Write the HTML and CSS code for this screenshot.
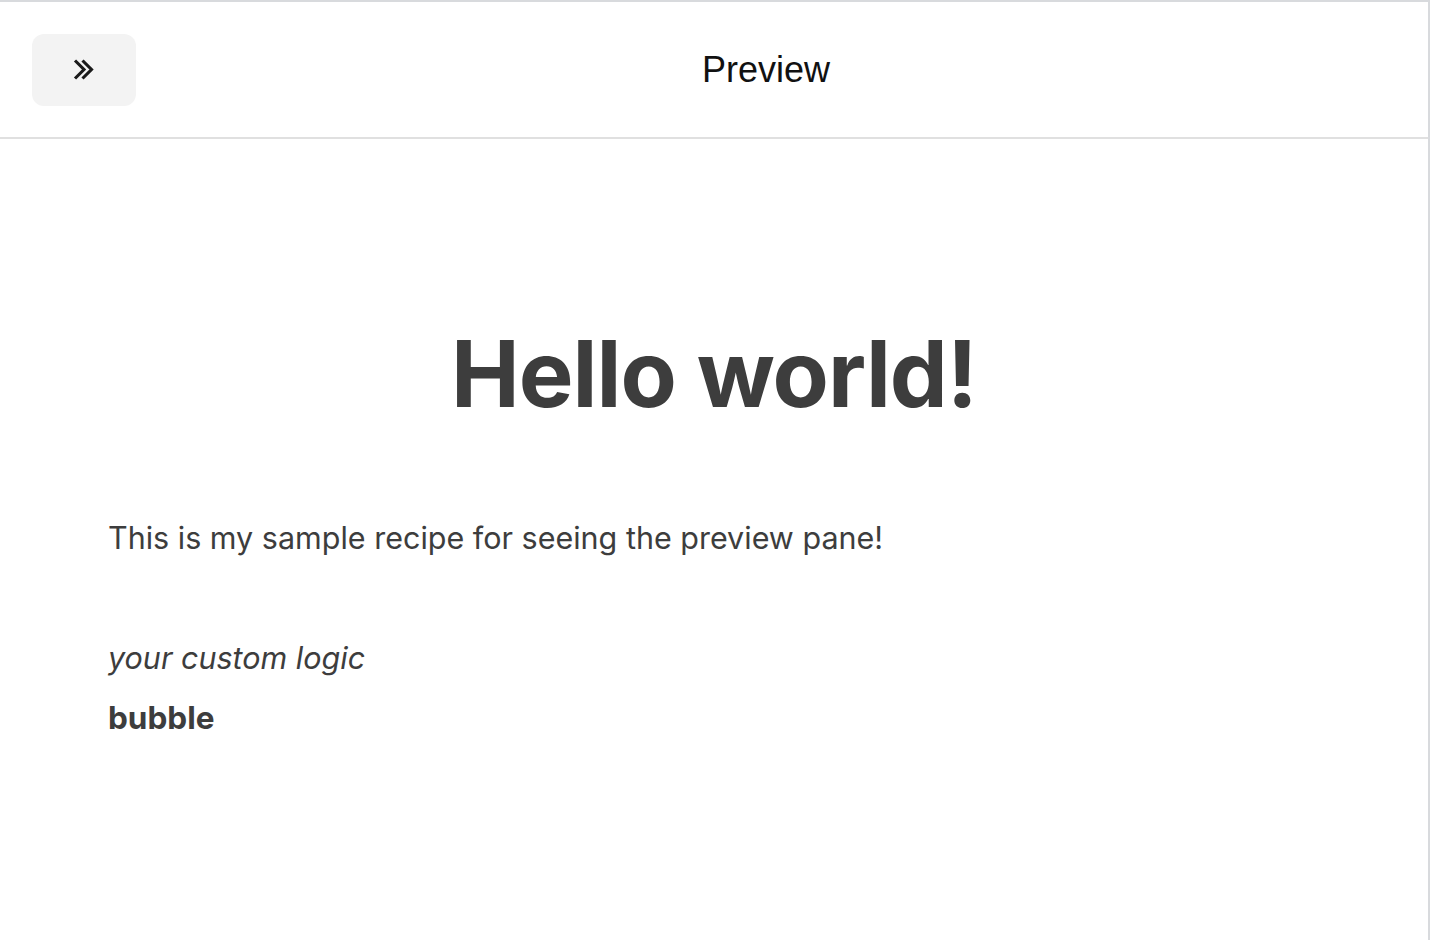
FILE: index.html
```html
<!DOCTYPE html>
<html>
<head>
<meta charset="utf-8">
<link rel="stylesheet" href="styles.css">
</head>
<body>
<div class="pane">
  <header class="bar">
    <button class="toggle" aria-label="Expand">
      <svg width="26" height="24" viewBox="0 0 26 24" fill="none" stroke="#1a1a1a" stroke-width="3.1" stroke-linecap="butt" stroke-linejoin="miter">
        <polyline points="4,2.5 13,11.5 4,20.5"/>
        <polyline points="11.5,2.5 20.5,11.5 11.5,20.5"/>
      </svg>
    </button>
    <div class="title">Preview</div>
  </header>
  <main class="content">
    <h1 class="heading">Hello world!</h1>
    <p class="lead">This is my sample recipe for seeing the preview pane!</p>
    <p class="italic">your custom logic</p>
    <p class="bold">bubble</p>
  </main>
</div>
</body>
</html>
```
FILE: styles.css
```css
html, body {
  margin: 0;
  padding: 0;
  background: #ffffff;
}
.pane {
  width: 1430px;
  height: 940px;
  box-sizing: border-box;
  border-top: 2px solid #d8dadd;
  border-right: 2px solid #d8dadd;
  display: flex;
  flex-direction: column;
}
.bar {
  height: 137px;
  flex: none;
  box-sizing: border-box;
  border-bottom: 2px solid #e0e0e0;
  display: flex;
  align-items: center;
  padding: 0 32px;
}
.toggle {
  width: 104px;
  height: 72px;
  border: none;
  border-radius: 12px;
  background: #f3f3f3;
  display: flex;
  align-items: center;
  justify-content: center;
  padding: 0;
  margin-top: 1px;
}
.title {
  flex: 1;
  text-align: center;
  font-family: "Liberation Sans", Arial, sans-serif;
  font-size: 36px;
  color: #111111;
}
.content {
  padding: 0 108px;
  font-family: Inter, "Noto Sans", sans-serif;
  color: #3d3d3d;
}
.heading {
  margin: 179px 0 0;
  text-align: center;
  font-size: 92px;
  line-height: 112px;
  font-weight: 700;
  letter-spacing: -1px;
}
.lead {
  margin: 88px 0 0;
  font-size: 30.5px;
  line-height: 40px;
}
.italic {
  margin: 80px 0 0;
  font-size: 30.5px;
  line-height: 40px;
  font-style: italic;
}
.bold {
  margin: 20px 0 0;
  font-size: 31.5px;
  line-height: 40px;
  font-weight: 700;
}
```
